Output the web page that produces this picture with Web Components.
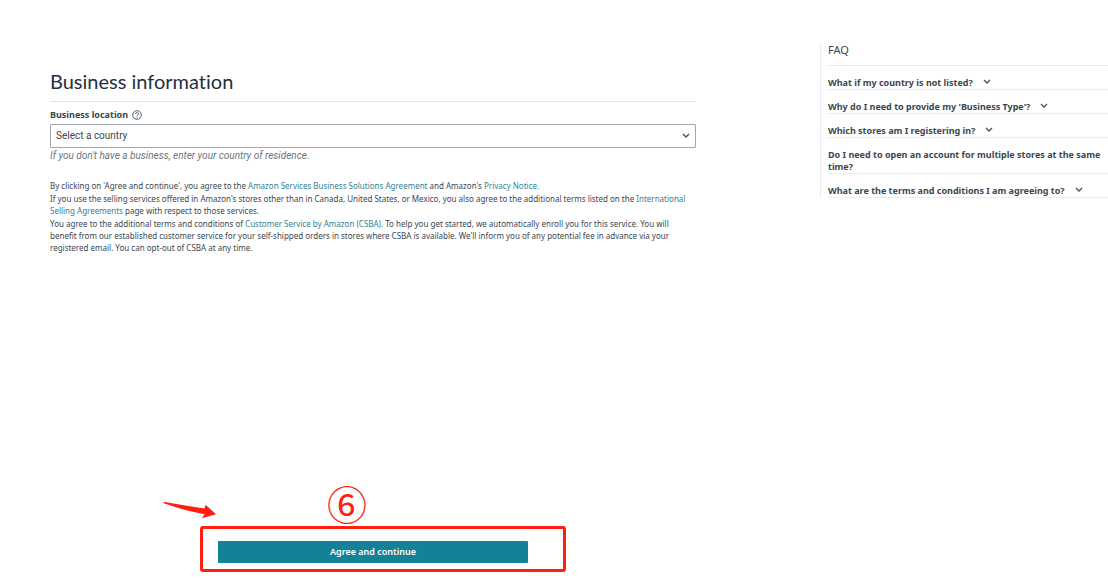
<!DOCTYPE html>
<html lang="en">
<head>
<meta charset="utf-8">
<title>Business information</title>
<style>
  body {
    margin: 0;
    background: #fff;
    color: #3a4751;
    font-family: "Noto Sans", "Open Sans", sans-serif;
    --link: #35818f;
    --accent: #148296;
    --mark: #ff1e10;
    --rule: #dfe2e2;
  }
</style>
</head>
<body>
<registration-page>
  <business-form slot="main"></business-form>
  <legal-terms slot="main"></legal-terms>
  <submit-area slot="action">Agree and continue</submit-area>
  <faq-panel slot="aside">
    <faq-item>What if my country is not listed?</faq-item>
    <faq-item>Why do I need to provide my 'Business Type'?</faq-item>
    <faq-item>Which stores am I registering in?</faq-item>
    <faq-item plain>Do I need to open an account for multiple stores at the same time?</faq-item>
    <faq-item>What are the terms and conditions I am agreeing to?</faq-item>
  </faq-panel>
</registration-page>

<script>
function define(name, html) {
  customElements.define(name, class extends HTMLElement {
    constructor() {
      super();
      this.attachShadow({ mode: "open" }).innerHTML = html;
    }
  });
}

define("registration-page", `
  <style>
    :host { display: grid; grid-template-columns: minmax(0, 646fr) minmax(0, 288fr);
      column-gap: 124px; padding-left: 50px; min-height: 100vh; box-sizing: border-box; }
    main { display: flex; flex-direction: column; padding: 69px 0 16px; }
    .action { margin-top: auto; }
    aside { padding-top: 43px; }
  </style>
  <main>
    <slot name="main"></slot>
    <div class="action"><slot name="action"></slot></div>
  </main>
  <aside><slot name="aside"></slot></aside>
`);

define("business-form", `
  <style>
    :host { display: block; }
    h1 { margin: 0 0 7px; padding-bottom: 8px; border-bottom: 1px solid var(--rule);
      font: 400 20px/24px Lato, sans-serif; font-variant-ligatures: none; color: #232f3e; }
    .label { display: flex; align-items: center; gap: 4px; height: 12px; margin-bottom: 3px; }
    label { font-size: 9px; font-weight: 700; line-height: 12px; }
    .label svg { width: 10px; height: 10px; }
    .field { display: grid; align-items: center; }
    .field > * { grid-area: 1 / 1; }
    select { appearance: none; width: 100%; height: 24px; margin: 0; padding: 0 20px 0 5px;
      border: 1px solid #a2a9ae; border-radius: 1px; background: #fff; color: #3c4751;
      font: 400 10px/14px Roboto, sans-serif; }
    .field svg { width: 8px; height: 8px; justify-self: end; margin-right: 6px; pointer-events: none; }
    p { margin: 1px 0 0; font: italic 400 10px/13px Roboto, sans-serif; color: #6c7580; }
  </style>
  <h1>Business information</h1>
  <div class="label">
    <label for="country">Business location</label>
    <svg viewBox="0 0 10 10" fill="none" stroke="#45515c" aria-hidden="true">
      <circle cx="5" cy="5" r="4.3" stroke-width=".9"/>
      <path d="M3.6 4c0-1.9 2.9-1.8 2.9-.1C6.500 5 5 4.900 5 6.100" stroke-width=".9"/>
      <path d="M5 6.900v1" stroke-width="1"/>
    </svg>
  </div>
  <div class="field">
    <select id="country"><option>Select a country</option></select>
    <svg viewBox="0 0 8 8" fill="none" stroke="#45515c" stroke-width="1.400" aria-hidden="true"><path d="M1 2 4 5 7 2"/></svg>
  </div>
  <p>If you don't have a business, enter your country of residence.</p>
`);

define("legal-terms", `
  <style>
    :host { display: flex; flex-direction: column; gap: 1px; margin-top: 18px;
      font-size: 8px; line-height: 12px; }
    p { margin: 0; }
    a { color: var(--link); text-decoration: none; }
  </style>
  <p>By clicking on 'Agree and continue', you agree to the <a href="#agreement">Amazon Services Business Solutions Agreement</a> and Amazon's <a href="#privacy">Privacy Notice.</a></p>
  <p>If you use the selling services offered in Amazon's stores other than in Canada, United States, or Mexico, you also agree to the additional terms listed on the <a href="#international">International Selling Agreements</a> page with respect to those services.</p>
  <p>You agree to the additional terms and conditions of <a href="#csba">Customer Service by Amazon (CSBA)</a>. To help you get started, we automatically enroll you for this service. You will benefit from our established customer service for your self-shipped orders in stores where CSBA is available. We'll inform you of any potential fee in advance via your registered email. You can opt-out of CSBA at any time.</p>
`);

define("submit-area", `
  <style>
    :host { display: block; width: 310px; margin: 0 auto; position: relative; }
    button { display: block; width: 100%; height: 22px; margin: 0; padding: 0; border: 0;
      border-radius: 1px; background: var(--accent); color: #fff;
      font: 600 9px/22px "Noto Sans", sans-serif; }
    .frame { position: absolute; inset: -15px -38px -9px -18px;
      border: 3px solid var(--mark); border-radius: 3px; pointer-events: none; }
    .arrow { position: absolute; left: -56px; top: -42px; width: 54px; height: 20px; }
    .step { position: absolute; left: 109px; top: -58px;
      color: var(--mark); font: 400 40px/40px "Noto Sans CJK SC", sans-serif; }
  </style>
  <svg class="arrow" viewBox="0 0 54 20" fill="var(--mark)" aria-hidden="true"><path d="M2 3Q1 4.200 2.500 4.500 22 11.500 42.500 15.300L40 19.200 54 15.300 43.500 5.700 42.500 9.600Q22 6.500 3 3Z"/></svg>
  <span class="step">⑥</span>
  <button type="submit"><slot></slot></button>
  <div class="frame"></div>
`);

define("faq-panel", `
  <style>
    :host { display: block; padding-left: 7px; border-left: 1px solid #ebeded; }
    h2 { margin: 0; padding-bottom: 8px; border-bottom: 1px solid #e7e9e9;
      font-size: 11px; font-weight: 400; line-height: 14px; }
  </style>
  <h2>FAQ</h2>
  <slot></slot>
`);

define("faq-item", `
  <style>
    :host { display: block; border-bottom: 1px solid #ebeded; }
    button { display: block; width: 100%; margin: 0; padding: 11px 0 0; border: 0;
      background: none; color: inherit; text-align: left;
      font: 700 9px/12px "Noto Sans", sans-serif; }
    svg { width: 8px; height: 8px; margin-left: 10px; }
    :host([plain]) svg { display: none; }
  </style>
  <button type="button" aria-expanded="false"><slot></slot><svg viewBox="0 0 8 8" fill="none" stroke="#45515c" stroke-width="1.300" aria-hidden="true"><path d="M1 2 4 5 7 2"/></svg></button>
`);
</script>
</body>
</html>
